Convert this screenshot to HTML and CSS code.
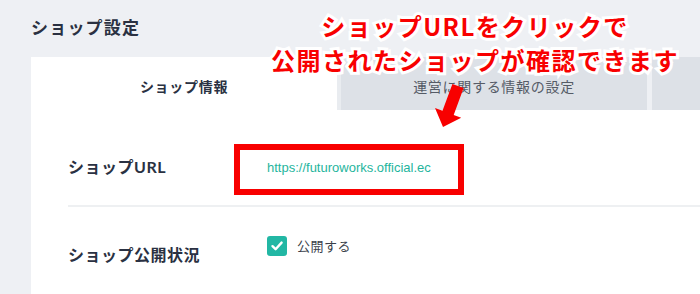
FILE: index.html
```html
<!DOCTYPE html>
<html>
<head>
    <title>ショップ設定</title>
    <link rel="stylesheet" href="styles.css">
</head>
<body>
    <h1 class="page-title">ショップ設定</h1>

    <div class="card">
        <div class="tabs">
            <div class="tab tab-active">ショップ情報</div>
            <div class="tab">運営に関する情報の設定</div>
            <div class="tab tab-last"></div>
        </div>

        <div class="row row-url">
            <div class="label">ショップURL</div>
            <div class="value">
                <a class="shop-url" href="#">https://futuroworks.official.ec</a>
            </div>
        </div>

        <div class="row row-status">
            <div class="label label-status">ショップ公開状況</div>
            <div class="value">
                <label class="check">
                    <span class="check-box">
                        <svg width="14" height="14" viewBox="0 0 14 14"><path d="M2.5 7.2 L5.6 10.2 L11.6 3.6" fill="none" stroke="#fff" stroke-width="2.4" stroke-linecap="round" stroke-linejoin="round"/></svg>
                    </span>
                    公開する
                </label>
            </div>
        </div>
    </div>

    <!-- annotation overlay -->
    <div class="note">ショップURLをクリックで<br>公開されたショップが確認できます</div>
    <svg class="note-arrow" width="700" height="294" viewBox="0 0 700 294">
        <polygon points="452.4,83.9 463.6,88.1 453.7,115 461.2,117.7 443,127 435,108.1 442.5,110.8" fill="#f80000"/>
    </svg>
</body>
</html>
```

FILE: styles.css
```css
html, body { width: 700px; height: 294px; }
body { margin: 0; padding: 16px 0 0 31px; box-sizing: border-box; overflow: hidden; background: #eef0f4; font-family: "Lato", "Noto Sans CJK JP", sans-serif; color: #2a3142; position: relative; }
.page-title { margin: 0 0 17px 0; font-size: 17px; line-height: 24px; font-weight: 700; letter-spacing: 1.2px; }

.card { background: #fff; height: 237px; overflow: hidden; }
.tabs { display: flex; height: 53px; }
.tab { flex: 0 0 306px; box-sizing: border-box; padding-top: 6px; line-height: 47px; text-align: center; font-size: 14px; letter-spacing: 0.7px; background: #dde1e7; color: #555b66; border-left: 4px solid #e9ecf0; }
.tab-active { background: #fff; color: #2a3142; font-weight: 700; border-left: none; }
.tab + .tab { flex-basis: 310px; }
.tab-last { border-left: 5px solid #eef0f4; }

.row { display: flex; margin-left: 37px; }
.row-url { align-items: center; padding: 45px 0 26px 0; border-bottom: 2px solid #eef0f2; }
.row-status { align-items: flex-start; padding-top: 29px; }
.label { flex: 0 0 199px; font-size: 16px; line-height: 24px; font-weight: 700; letter-spacing: 0.5px; }
.label-status { margin-top: 7px; }

.shop-url { position: relative; display: inline-block; font-family: "Liberation Sans", Arial, sans-serif; font-size: 13px; line-height: 20px; color: #1fb59d; text-decoration: none; }
.shop-url::after { content: ""; position: absolute; left: -33px; right: -33px; top: -14px; bottom: -17px; border: 6px solid #f80000; }

.check { display: flex; align-items: center; font-size: 13px; line-height: 20px; color: #3a3f4a; letter-spacing: 0.5px; }
.check-box { width: 20px; height: 20px; border-radius: 3px; background: #22b7a4; display: flex; align-items: center; justify-content: center; margin-right: 10px; }

.note { position: absolute; left: 250px; top: 9px; width: 450px; text-align: center; font-family: "Noto Sans CJK JP", sans-serif; font-weight: 700; font-size: 24px; line-height: 34px; letter-spacing: 1.5px; color: #f80000; -webkit-text-stroke: 6px #fff; paint-order: stroke fill; }
.note-arrow { position: absolute; left: 0; top: 0; }
```
